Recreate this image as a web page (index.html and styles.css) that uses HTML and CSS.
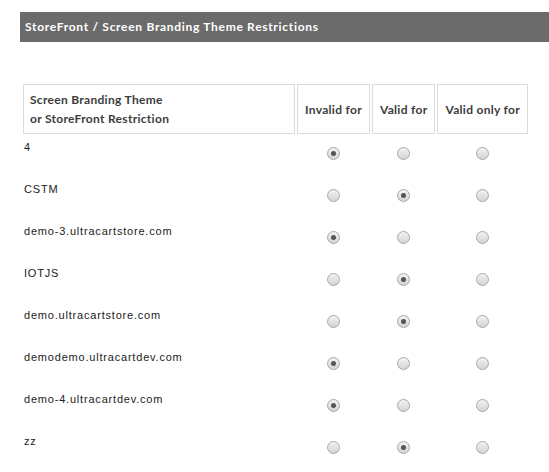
FILE: index.html
```html
<!DOCTYPE html>
<html lang="en">
  <head>
    <meta charset="UTF-8" />
    <title>StoreFront Restrictions</title>
    <link rel="stylesheet" href="styles.css">
  </head>
  <body>
    <div class="sectionHeader">StoreFront / Screen Branding Theme Restrictions</div>

    <table class="restrictions">
      <thead>
        <tr>
          <th class="nameCol">Screen Branding Theme<br />or StoreFront Restriction</th>
          <th>Invalid for</th>
          <th>Valid for</th>
          <th>Valid only for</th>
        </tr>
      </thead>
      <tbody>
        <tr>
          <td>4</td>
          <td class="radioCell"><input type="radio" name="r0" checked /></td>
          <td class="radioCell"><input type="radio" name="r0" /></td>
          <td class="radioCell"><input type="radio" name="r0" /></td>
        </tr>
        <tr>
          <td>CSTM</td>
          <td class="radioCell"><input type="radio" name="r1" /></td>
          <td class="radioCell"><input type="radio" name="r1" checked /></td>
          <td class="radioCell"><input type="radio" name="r1" /></td>
        </tr>
        <tr>
          <td>demo-3.ultracartstore.com</td>
          <td class="radioCell"><input type="radio" name="r2" checked /></td>
          <td class="radioCell"><input type="radio" name="r2" /></td>
          <td class="radioCell"><input type="radio" name="r2" /></td>
        </tr>
        <tr>
          <td>IOTJS</td>
          <td class="radioCell"><input type="radio" name="r3" /></td>
          <td class="radioCell"><input type="radio" name="r3" checked /></td>
          <td class="radioCell"><input type="radio" name="r3" /></td>
        </tr>
        <tr>
          <td>demo.ultracartstore.com</td>
          <td class="radioCell"><input type="radio" name="r4" /></td>
          <td class="radioCell"><input type="radio" name="r4" checked /></td>
          <td class="radioCell"><input type="radio" name="r4" /></td>
        </tr>
        <tr>
          <td>demodemo.ultracartdev.com</td>
          <td class="radioCell"><input type="radio" name="r5" checked /></td>
          <td class="radioCell"><input type="radio" name="r5" /></td>
          <td class="radioCell"><input type="radio" name="r5" /></td>
        </tr>
        <tr>
          <td>demo-4.ultracartdev.com</td>
          <td class="radioCell"><input type="radio" name="r6" checked /></td>
          <td class="radioCell"><input type="radio" name="r6" /></td>
          <td class="radioCell"><input type="radio" name="r6" /></td>
        </tr>
        <tr>
          <td>zz</td>
          <td class="radioCell"><input type="radio" name="r7" /></td>
          <td class="radioCell"><input type="radio" name="r7" checked /></td>
          <td class="radioCell"><input type="radio" name="r7" /></td>
        </tr>
      </tbody>
    </table>
  </body>
</html>
```

FILE: styles.css
```css
body {
  margin: 0;
  padding: 12px 0 0 20px;
  background-color: white;
  overflow: hidden;
}
.sectionHeader {
  background-color: #6b6b6b;
  color: white;
  font-family: "Lato", sans-serif;
  font-weight: bold;
  font-size: 12px;
  letter-spacing: 0.7px;
  height: 30px;
  line-height: 30px;
  padding-left: 5px;
}
.restrictions {
  margin-top: 40px;
  margin-left: 1px;
  border-collapse: separate;
  border-spacing: 2px;
}
th {
  border: 1px solid #dcdcdc;
  font-family: "Lato", sans-serif;
  font-weight: bold;
  font-size: 12px;
  color: #3c3c3c;
  letter-spacing: 0.3px;
  line-height: 19px;
  height: 42px;
  padding: 3px 7px;
  text-align: center;
  white-space: nowrap;
}
th.nameCol {
  text-align: left;
  padding-left: 6px;
  width: 257px;
}
td {
  font-family: "Liberation Sans", Arial, sans-serif;
  font-size: 11px;
  letter-spacing: 0.8px;
  color: #222;
  vertical-align: top;
  height: 34px;
  padding: 5px 1px 1px 1px;
}
.radioCell {
  text-align: center;
}
input[type="radio"] {
  appearance: none;
  width: 13px;
  height: 13px;
  margin: 6px 0 0 0;
  border: 1px solid #a8a8a8;
  border-radius: 50%;
  background: linear-gradient(#f2f2f2, #d4d4d4);
  position: relative;
}
input[type="radio"]:checked::after {
  content: "";
  position: absolute;
  left: 3px;
  top: 3px;
  width: 5px;
  height: 5px;
  border-radius: 50%;
  background-color: #555;
}
```
